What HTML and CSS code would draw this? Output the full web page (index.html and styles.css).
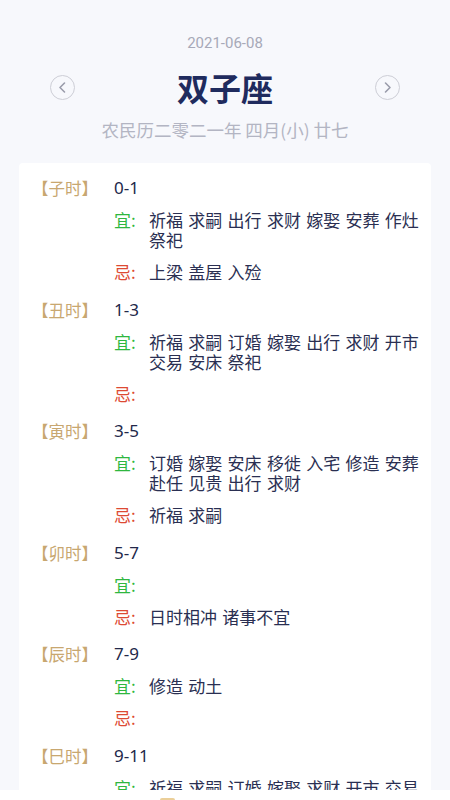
FILE: index.html
```html
<!DOCTYPE html>
<html lang="zh-CN">
<head>
<meta charset="utf-8">
<title>双子座</title>
<link rel="stylesheet" href="styles.css">
</head>
<body>
<header class="head">
  <div class="date">2021-06-08</div>
  <div class="title-row">
    <button class="nav" aria-label="prev">
      <svg viewBox="0 0 25 25" width="25" height="25"><path d="M14.5 8 L10 12.5 L14.5 17" fill="none" stroke="#9a9cab" stroke-width="1.6" stroke-linecap="round" stroke-linejoin="round"/></svg>
    </button>
    <h1 class="title">双子座</h1>
    <button class="nav" aria-label="next">
      <svg viewBox="0 0 25 25" width="25" height="25"><path d="M10.5 8 L15 12.5 L10.5 17" fill="none" stroke="#9a9cab" stroke-width="1.6" stroke-linecap="round" stroke-linejoin="round"/></svg>
    </button>
  </div>
  <div class="lunar">农民历二零二一年 四月(小) 廿七</div>
</header>

<main class="card">
  <section class="row">
    <div class="label">【子时】</div>
    <div class="info">
      <div class="time">0-1</div>
      <div class="item"><span class="yi">宜:</span><span class="txt">祈福 求嗣 出行 求财 嫁娶 安葬 作灶 祭祀</span></div>
      <div class="item"><span class="ji">忌:</span><span class="txt">上梁 盖屋 入殓</span></div>
    </div>
  </section>
  <section class="row">
    <div class="label">【丑时】</div>
    <div class="info">
      <div class="time">1-3</div>
      <div class="item"><span class="yi">宜:</span><span class="txt">祈福 求嗣 订婚 嫁娶 出行 求财 开市 交易 安床 祭祀</span></div>
      <div class="item"><span class="ji">忌:</span><span class="txt"></span></div>
    </div>
  </section>
  <section class="row">
    <div class="label">【寅时】</div>
    <div class="info">
      <div class="time">3-5</div>
      <div class="item"><span class="yi">宜:</span><span class="txt">订婚 嫁娶 安床 移徙 入宅 修造 安葬 赴任 见贵 出行 求财</span></div>
      <div class="item"><span class="ji">忌:</span><span class="txt">祈福 求嗣</span></div>
    </div>
  </section>
  <section class="row">
    <div class="label">【卯时】</div>
    <div class="info">
      <div class="time">5-7</div>
      <div class="item"><span class="yi">宜:</span><span class="txt"></span></div>
      <div class="item"><span class="ji">忌:</span><span class="txt">日时相冲 诸事不宜</span></div>
    </div>
  </section>
  <section class="row">
    <div class="label">【辰时】</div>
    <div class="info">
      <div class="time">7-9</div>
      <div class="item"><span class="yi">宜:</span><span class="txt">修造 动土</span></div>
      <div class="item"><span class="ji">忌:</span><span class="txt"></span></div>
    </div>
  </section>
  <section class="row">
    <div class="label">【巳时】</div>
    <div class="info">
      <div class="time">9-11</div>
      <div class="item"><span class="yi">宜:</span><span class="txt">祈福 求嗣 订婚 嫁娶 求财 开市 交易 安床</span></div>
      <div class="item"><span class="ji">忌:</span><span class="txt">出行</span></div>
    </div>
  </section>
</main>

<nav class="tabbar"><span class="tab-icon"></span></nav>
</body>
</html>
```
FILE: styles.css
```css
html, body {
  margin: 0;
  padding: 0;
}
body {
  background: #f7f8fc;
  font-family: "Noto Sans CJK SC", "Noto Sans", sans-serif;
  color: #2a2f52;
  height: 800px;
  overflow: hidden;
}
.head {
  padding-top: 33px;
  display: flex;
  flex-direction: column;
  align-items: center;
}
.date {
  font-family: Roboto, "Noto Sans", sans-serif;
  font-size: 15px;
  line-height: 20px;
  color: #a7a9b8;
}
.title-row {
  margin-top: 14px;
  width: 100%;
  box-sizing: border-box;
  padding: 0 50px;
  display: flex;
  align-items: center;
  justify-content: space-between;
}
.nav {
  width: 25px;
  height: 25px;
  padding: 0;
  border: 1px solid #cdced6;
  border-radius: 50%;
  background: transparent;
  display: flex;
  align-items: center;
  justify-content: center;
  box-sizing: border-box;
}
.nav svg {
  display: block;
  flex: none;
}
.title {
  margin: 0;
  font-size: 32px;
  line-height: 40px;
  font-weight: 700;
  color: #1f2b5e;
}
.lunar {
  margin-top: 11px;
  font-size: 17.5px;
  line-height: 24px;
  color: #b3b5c3;
}
.card {
  margin: 21px 19px 0;
  background: #ffffff;
  border-radius: 4px;
  padding: 15px 12px 0 13px;
}
.row {
  display: flex;
  margin-bottom: 17.5px;
  font-size: 17px;
  line-height: 20px;
}
.label {
  width: 82px;
  flex: none;
  font-size: 16.5px;
  color: #c8a770;
}
.info {
  flex: 1;
  display: flex;
  flex-direction: column;
  gap: 12px;
}
.time {
  font-family: "Noto Sans", "Noto Sans CJK SC", sans-serif;
  color: #22284a;
}
.item {
  display: flex;
}
.yi, .ji {
  flex: none;
  width: 35px;
}
.yi { color: #2fb73f; }
.ji { color: #dd4a33; }
.txt {
  flex: 1;
  color: #2a2f52;
  word-spacing: 1.5px;
}
.tabbar {
  position: fixed;
  left: 0;
  right: 0;
  top: 790px;
  height: 60px;
  background: #ffffff;
}
.tab-icon {
  position: absolute;
  left: 160px;
  top: 8px;
  width: 15px;
  height: 15px;
  border-radius: 2px;
  background: #ebcf99;
}
```
